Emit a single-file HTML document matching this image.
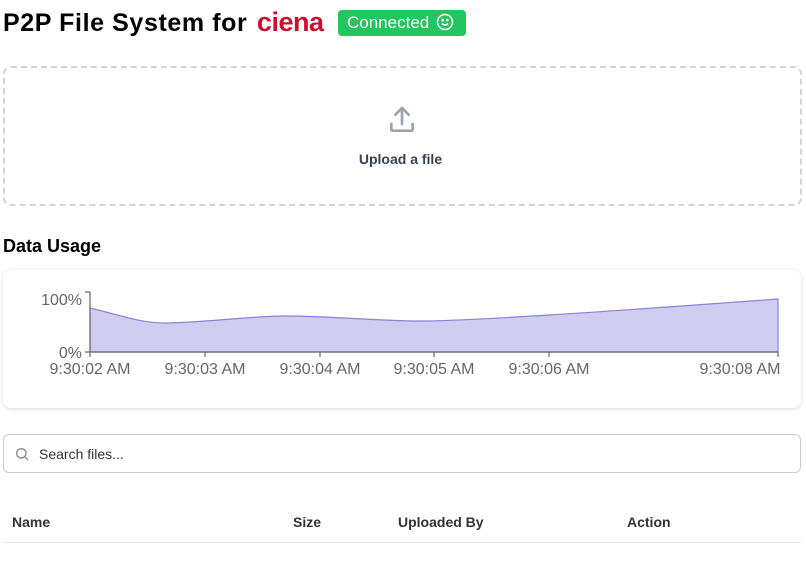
<!DOCTYPE html>
<html><head><meta charset="utf-8"><style>
body{margin:0;background:#fff;font-family:"Liberation Sans",sans-serif;width:806px;height:564px;overflow:hidden;position:relative}
.h1{position:absolute;left:3px;top:7px;font-size:25px;font-weight:bold;color:#000;letter-spacing:0.6px}
.ciena{color:#c8102e;font-weight:bold;font-size:27px;letter-spacing:-0.5px;margin-left:2px}
.badge{position:absolute;left:338px;top:10px;width:128px;height:26px;background:#22c55e;border-radius:4px;color:#fff;font-size:17px;line-height:26px;padding-left:9px;box-sizing:border-box}
.up{position:absolute;left:3px;top:66px;width:795px;height:136px;border:2px dashed #d1d5db;border-radius:8px}
.up .t{position:absolute;left:0;right:0;top:83px;text-align:center;font-size:14px;color:#374151;font-weight:bold}
.h2{position:absolute;left:3px;top:236px;font-size:18px;font-weight:bold}
.card{position:absolute;left:3px;top:270px;width:798px;height:138px;border-radius:8px;box-shadow:0 1px 4px rgba(0,0,0,.15)}
.search{position:absolute;left:3px;top:434px;width:796px;height:37px;border:1px solid #ccc;border-radius:6px}
.search span{position:absolute;left:35px;top:11px;font-size:14px;color:#333}
.th{position:absolute;top:514px;font-size:14px;font-weight:bold;color:#333}
.line{position:absolute;left:3px;top:542px;width:798px;height:1px;background:#e5e7eb}
</style></head><body>
<div class="h1">P2P File System for <span class="ciena">ciena</span></div>
<div class="badge">Connected <svg width="18" height="18" viewBox="0 0 24 24" style="vertical-align:-3px;margin-left:2px" fill="none" stroke="#fff" stroke-width="2"><circle cx="12" cy="12" r="10"/><path d="M8 14s1.5 2 4 2 4-2 4-2"/><circle cx="9" cy="9.5" r="0.8" fill="#fff"/><circle cx="15" cy="9.5" r="0.8" fill="#fff"/></svg></div>
<div class="up">
<svg style="position:absolute;left:381px;top:36px" width="32" height="32" viewBox="0 0 24 24" fill="none" stroke="#9ca3af" stroke-width="2" stroke-linecap="round" stroke-linejoin="round"><path d="M4 15v4a1 1 0 0 0 1 1h14a1 1 0 0 0 1-1v-4"/><path d="M12 15V3M7 8l5-5 5 5"/></svg>
<div class="t" style="left:-4px">Upload a file</div></div>
<div class="h2">Data Usage</div>
<div class="card"></div>
<svg style="position:absolute;left:0;top:0" width="806" height="400">
<path d="M90 308 C120 315,140 323,165 323 C200 323,250 316,285 316 C330 316,380 321,420 321 C470 321,600 312,778 299 L778 352 L90 352 Z" fill="#cfcdf0" stroke="#8884d8" stroke-width="1.2"/>
<g stroke="#666" stroke-width="1.2"><line x1="90" y1="292" x2="90" y2="352"/><line x1="85" y1="292" x2="90" y2="292"/><line x1="85" y1="352" x2="778" y2="352"/>
<line x1="90" y1="352" x2="90" y2="357"/><line x1="205" y1="352" x2="205" y2="357"/><line x1="320" y1="352" x2="320" y2="357"/><line x1="434" y1="352" x2="434" y2="357"/><line x1="549" y1="352" x2="549" y2="357"/><line x1="778" y1="352" x2="778" y2="357"/></g>
<g font-family="Liberation Sans" font-size="16" fill="#666" text-anchor="middle">
<text x="82" y="305" text-anchor="end">100%</text><text x="82" y="358" text-anchor="end">0%</text>
<text x="90" y="374">9:30:02 AM</text><text x="205" y="374">9:30:03 AM</text><text x="320" y="374">9:30:04 AM</text><text x="434" y="374">9:30:05 AM</text><text x="549" y="374">9:30:06 AM</text><text x="740" y="374">9:30:08 AM</text></g>
</svg>
<div class="search"><svg style="position:absolute;left:10px;top:11px" width="16" height="16" viewBox="0 0 24 24" fill="none" stroke="#888" stroke-width="2"><circle cx="11" cy="11" r="7"/><path d="M21 21l-5-5"/></svg><span>Search files...</span></div>
<div class="th" style="left:12px">Name</div><div class="th" style="left:293px">Size</div><div class="th" style="left:398px">Uploaded By</div><div class="th" style="left:627px">Action</div>
<div class="line"></div>
</body></html>
